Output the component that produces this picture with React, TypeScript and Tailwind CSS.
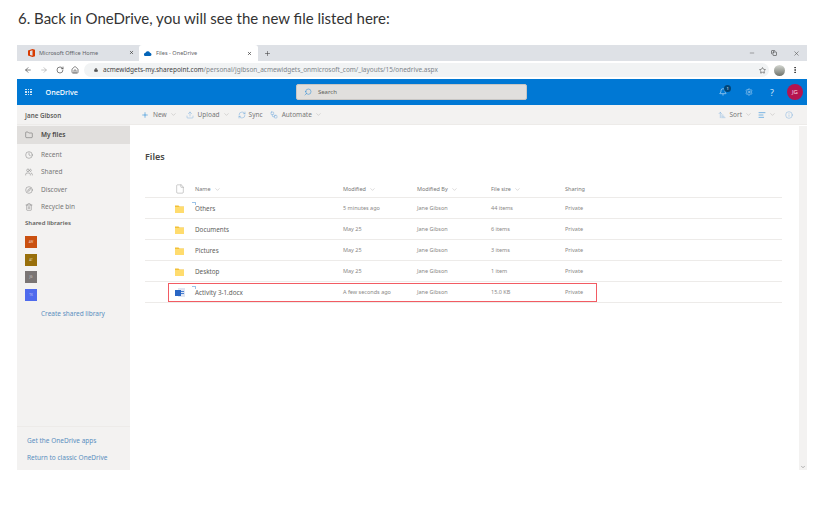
import { ArrowLeft, ArrowRight, ChevronDown, Copy, File, Folder, Home, Info, Lock, MoreVertical, Plus, RotateCw, Search, Star, Upload, X, Minus, RefreshCw, AlignLeft, ArrowUpNarrowWide, Bell, Settings, Clock, Users, Compass, Trash2, Workflow } from 'lucide-react';

const files = [
  { name: 'Others', modified: '5 minutes ago', size: '44 items', isNew: true },
  { name: 'Documents', modified: 'May 25', size: '6 items' },
  { name: 'Pictures', modified: 'May 25', size: '3 items' },
  { name: 'Desktop', modified: 'May 25', size: '1 item' },
];

const nav = [
  { label: 'Recent', icon: Clock },
  { label: 'Shared', icon: Users },
  { label: 'Discover', icon: Compass },
  { label: 'Recycle bin', icon: Trash2 },
];

const libraries = [
  { color: 'bg-[#ca5010]', text: 'AW' },
  { color: 'bg-[#986f0b]', text: 'AT' },
  { color: 'bg-[#7a7574]', text: 'JG' },
  { color: 'bg-[#4f6bed]', text: 'TK' },
];

function Caret({ className = 'text-[#a19f9d]' }: { className?: string }) {
  return <ChevronDown className={`w-[7px] h-[7px] ml-[3px] ${className}`} strokeWidth={1.25} />;
}

function FolderIcon() {
  return (
    <svg width="9" height="8" viewBox="0 0 9 8" className="shrink-0">
      <path d="M0 .5h3.5L4.5 1.5H9V8H0z" fill="#f2c037" />
      <path d="M0 2h9v6H0z" fill="#ffdc6e" />
    </svg>
  );
}

function WordIcon() {
  return (
    <svg width="10" height="9" viewBox="0 0 10 9" className="shrink-0">
      <rect x="3" y="0" width="7" height="9" fill="#dfe6f3" />
      <rect x="6" y="3" width="3" height="1" fill="#4a7fd0" />
      <rect x="6" y="5" width="3" height="1" fill="#4a7fd0" />
      <rect x="0" y="2" width="6" height="6" fill="#2a66c4" />
    </svg>
  );
}

function OfficeIcon() {
  return (
    <svg width="7" height="8" viewBox="0 0 7 8" className="mr-[4px] shrink-0">
      <path d="M0 1.5 4.5 0 7 .8v6.4L4.5 8 0 6.5zM4.5 1.3 2 2v4l2.5.7z" fill="#d83b01" fillRule="evenodd" />
    </svg>
  );
}

function SyncMark() {
  return <span className="absolute -left-[3px] -top-[2px] w-[4px] h-[3px] border-t border-r border-[#9cc3e8]" />;
}

function Row({ name, modified, size, isNew, icon }: { name: string; modified: string; size: string; isNew?: boolean; icon: React.ReactNode }) {
  return (
    <div className="flex items-center h-[21px] pt-px border-b border-[#edebe9]">
      <div className="w-[50px] pl-[30px] flex items-center">{icon}</div>
      <div className="w-[148px] relative text-[6.3px] text-[#605e5c]">
        {isNew && <SyncMark />}
        {name}
      </div>
      <div className="w-[74px] text-[5.5px] text-[#8a8886]">{modified}</div>
      <div className="w-[74px] text-[5.5px] text-[#8a8886]">Jane Gibson</div>
      <div className="w-[74px] text-[5.5px] text-[#8a8886]">{size}</div>
      <div className="text-[5.5px] text-[#8a8886]">Private</div>
    </div>
  );
}

export default function App() {
  return (
    <div className="w-[824px] h-[519px] bg-white overflow-hidden font-['Noto_Sans',sans-serif]">
      <p className="pl-[18px] pt-[7px] h-[45px] text-[15px] leading-[22px] text-[#333] font-['Lato',sans-serif]">
        6. Back in OneDrive, you will see the new file listed here:
      </p>

      <div className="ml-[17px] w-[790px] h-[425px] flex flex-col">
        {/* Browser tabs */}
        <div className="h-[16px] bg-[#dee1e6] flex items-center shrink-0 text-[5.6px] text-[#5f6368]">
          <div className="w-[122px] flex items-center pl-[11px] pr-[5px]">
            <OfficeIcon />
            <span>Microsoft Office Home</span>
            <X className="w-[5px] h-[5px] ml-auto text-[#333]" strokeWidth={3} />
          </div>
          <div className="w-[119px] h-full bg-white rounded-t-[3px] flex items-center pl-[5px] pr-[6px]">
            <svg width="8" height="5" viewBox="0 0 8 5" className="mr-[4px]">
              <path d="M1.5 5a1.5 1.5 0 0 1-.2-3A2.6 2.6 0 0 1 6 1.7 1.7 1.7 0 0 1 6.3 5z" fill="#0364b8" />
            </svg>
            <span>Files - OneDrive</span>
            <X className="w-[5px] h-[5px] ml-auto text-[#333]" strokeWidth={3} />
          </div>
          <Plus className="w-[7px] h-[7px] ml-[6px] text-[#444]" strokeWidth={2} />
          <div className="ml-auto flex items-center gap-[16px] pr-[7px] text-[#555]">
            <Minus className="w-[6px] h-[6px]" strokeWidth={2} />
            <Copy className="w-[6px] h-[6px] text-[#222]" strokeWidth={2} />
            <X className="w-[7px] h-[7px]" strokeWidth={2} />
          </div>
        </div>

        {/* Address bar */}
        <div className="h-[18px] bg-white flex items-center shrink-0 pl-[7px] pr-[8px] text-[#5f6368]">
          <ArrowLeft className="w-[8px] h-[8px] text-[#444]" strokeWidth={2} />
          <ArrowRight className="w-[8px] h-[8px] ml-[8px] text-[#aaa]" strokeWidth={2} />
          <RotateCw className="w-[8px] h-[8px] ml-[8px] text-[#444]" strokeWidth={2} />
          <Home className="w-[8px] h-[8px] ml-[7px] text-[#444]" strokeWidth={2} />
          <div className="ml-[5px] flex-1 h-[14px] rounded-full bg-[#f1f3f4] flex items-center pl-[10px] pr-[3px] text-[6.48px]">
            <Lock className="w-[4px] h-[4px] mr-[5px] text-[#555] fill-[#555]" />
            <span className="text-[#444]">acmewidgets-my.sharepoint.com</span>
            <span className="text-[#80868b]">/personal/jgibson_acmewidgets_onmicrosoft_com/_layouts/15/onedrive.aspx</span>
            <Star className="w-[7px] h-[7px] ml-auto text-[#444]" strokeWidth={2} />
          </div>
          <span className="w-[11px] h-[11px] ml-[5px] rounded-full bg-gradient-to-b from-[#d5d8d2] to-[#6f736c]" />
          <MoreVertical className="w-[8px] h-[8px] ml-[6px] text-[#333]" strokeWidth={3} />
        </div>

        {/* OneDrive suite bar */}
        <div className="h-[26px] bg-[#0078d4] flex items-center shrink-0 text-white relative">
          <div className="ml-[8px] grid grid-cols-3 gap-[1px]">
            {Array.from({ length: 9 }).map((_, i) => (
              <span key={i} className="w-[1.5px] h-[1.5px] bg-white/80" />
            ))}
          </div>
          <span className="ml-[14px] text-[7.2px] font-medium">OneDrive</span>
          <div className="ml-[218px] w-[231px] h-[16px] bg-[#e1dfdd] rounded-[2px] flex items-center pl-[7px] text-[#605e5c] text-[6px] border border-[#c8c6c4]">
            <Search className="w-[8px] h-[8px] mr-[6px] text-[#0078d4] -scale-x-100" strokeWidth={1.25} />
            Search
          </div>
          <div className="ml-auto flex items-center pr-[4px]">
            <span className="relative">
              <Bell className="w-[8px] h-[8px]" strokeWidth={1.5} />
              <span className="absolute -top-[3px] -right-[4px] w-[7px] h-[7px] rounded-full bg-[#004578] text-[4px] leading-[7px] text-center">1</span>
            </span>
            <Settings className="w-[8px] h-[8px] ml-[18px] text-[#cfe4f7]" strokeWidth={1.5} />
            <span className="ml-[17px] text-[9px] leading-none text-[#cfe4f7]">?</span>
            <span className="ml-[13px] w-[16px] h-[16px] rounded-full bg-[#b4144f] text-[6px] leading-[16px] text-center text-[#f6d6e0]">JG</span>
          </div>
        </div>

        {/* Command bar */}
        <div className="h-[20px] bg-[#f3f2f1] flex items-center shrink-0 border-b border-[#edebe9]">
          <div className="w-[113px] pl-[8px] pt-[2px] text-[6.3px] font-semibold text-[#605e5c]">Jane Gibson</div>
          <div className="flex items-center text-[6.5px] text-[#777] pl-[11px]">
            <Plus className="w-[8px] h-[8px] mr-[4px] text-[#0078d4]" strokeWidth={1.5} />New<Caret />
            <Upload className="w-[8px] h-[8px] ml-[9px] mr-[4px] text-[#6ea8dc]" strokeWidth={1.25} />Upload<Caret />
            <RefreshCw className="w-[8px] h-[8px] ml-[8px] mr-[3px] text-[#5a9bd8]" strokeWidth={1.25} />Sync
            <Workflow className="w-[8px] h-[8px] ml-[7px] mr-[4px] text-[#5a9bd8]" strokeWidth={1.25} />Automate<Caret />
          </div>
          <div className="ml-auto flex items-center pr-[14px] text-[6.5px] text-[#777]">
            <ArrowUpNarrowWide className="w-[8px] h-[8px] mr-[3px] text-[#6ea8dc]" strokeWidth={1.25} />Sort<Caret />
            <AlignLeft className="w-[8px] h-[8px] ml-[6px] text-[#0078d4]" strokeWidth={1.5} /><Caret />
            <Info className="w-[8px] h-[8px] ml-[9px] text-[#6ea8dc]" strokeWidth={1.25} />
          </div>
        </div>

        <div className="flex flex-1 min-h-0">
          {/* Sidebar */}
          <aside className="w-[113px] bg-[#f3f2f1] flex flex-col shrink-0 text-[6.5px] text-[#777]">
            <div className="h-[18px] mt-px bg-[#e1dfdd] flex items-center pl-[8px] font-semibold text-[#484644]">
              <Folder className="w-[8px] h-[8px] mr-[8px] text-[#444]" strokeWidth={1.25} />My files
            </div>
            <div className="h-[2px] shrink-0" />
            {nav.map(({ label, icon: Icon }) => (
              <div key={label} className="h-[17.5px] flex items-center pl-[8px]">
                <Icon className="w-[8px] h-[8px] mr-[8px] text-[#666]" strokeWidth={1.25} />
                {label}
              </div>
            ))}
            <div className="h-[15px] flex items-center pl-[8px] text-[6px] font-semibold text-[#605e5c]">Shared libraries</div>
            <div className="pl-[8px] pt-[5px] flex flex-col gap-[5.7px]">
              {libraries.map((lib) => (
                <span key={lib.text} className={`w-[12px] h-[12px] ${lib.color} text-[3px] leading-[12px] text-center text-white/70`}>
                  {lib.text}
                </span>
              ))}
            </div>
            <div className="pl-[24px] mt-[8px] h-[10px] leading-[10px] text-[#5a8fc0]">Create shared library</div>
            <div className="mt-auto border-t border-[#edebe9] h-[44px] pl-[10px] pt-[9px] text-[#5a8fc0] flex flex-col gap-[8px] leading-[9px]">
              <span>Get the OneDrive apps</span>
              <span>Return to classic OneDrive</span>
            </div>
          </aside>

          {/* File list */}
          <main className="flex-1 pl-[15px] pr-0 min-w-0">
            <h1 className="mt-[25px] h-[14px] text-[9px] leading-[14px] font-semibold text-[#484644]">Files</h1>
            <div className="mt-[16px] w-[637px]">
              <div className="flex items-center h-[18px] pt-px border-b border-[#edebe9] text-[5.5px] text-[#777]">
                <div className="w-[50px] pl-[30px]">
                  <File className="w-[10px] h-[10px] text-[#888]" strokeWidth={1} />
                </div>
                <div className="w-[148px] flex items-center">Name<Caret /></div>
                <div className="w-[74px] flex items-center">Modified<Caret /></div>
                <div className="w-[74px] flex items-center">Modified By<Caret /></div>
                <div className="w-[74px] flex items-center">File size<Caret /></div>
                <div>Sharing</div>
              </div>
              {files.map((f) => (
                <Row key={f.name} {...f} icon={<FolderIcon />} />
              ))}
              <div className="relative">
                <Row name="Activity 3-1.docx" modified="A few seconds ago" size="15.0 KB" isNew icon={<WordIcon />} />
                <span className="absolute left-[23px] top-[1px] w-[429px] h-[19px] border border-[#f25b63]" />
              </div>
            </div>
          </main>

          {/* Scrollbar */}
          <div className="w-[8px] shrink-0 bg-[#f3f2f1] flex flex-col items-center justify-end mt-[1px]">
            <ChevronDown className="w-[6px] h-[6px] text-[#999]" strokeWidth={3} />
          </div>
        </div>
      </div>
    </div>
  );
}
